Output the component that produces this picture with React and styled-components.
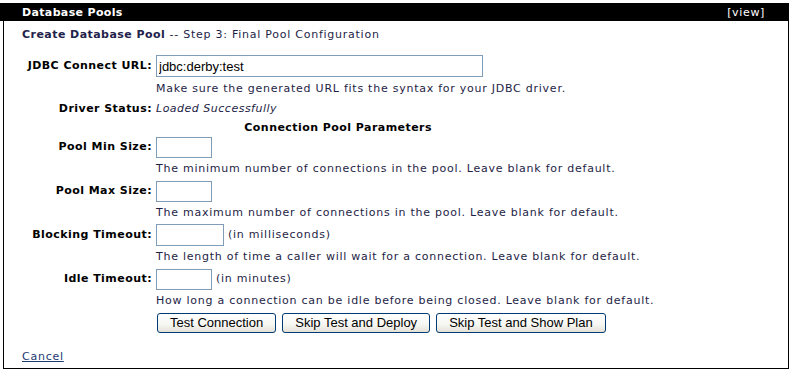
import React from "react";
import styled, { createGlobalStyle } from "styled-components";

const GlobalStyle = createGlobalStyle`
  html, body { margin: 0; padding: 0; background: #fff; }
  body {
    font-family: "DejaVu Sans", Verdana, sans-serif;
    font-size: 11px;
    letter-spacing: 0.75px;
    color: #1e1e46;
  }
`;

const Panel = styled.div`
  box-sizing: border-box;
  margin: 3px 0 0 3px;
  width: 786px;
  height: 366px;
  border: 1px solid #000;
`;

const Header = styled.div`
  display: flex;
  justify-content: space-between;
  align-items: center;
  height: 18px;
  margin: -1px -1px 0 -4px;
  padding: 0 24px 0 22px;
  background: #000;
  color: #fff;
`;

const HeaderTitle = styled.span`
  font-weight: bold;
  font-size: 11px;
  letter-spacing: 0.35px;
`;

const HeaderLink = styled.span`
  font-size: 11px;
  letter-spacing: 0.65px;
`;

const Subtitle = styled.div`
  margin: 7px 0 0 18px;
  line-height: 14px;
  color: #1e1e46;
`;

const Strong = styled.b`
  color: #22224a;
  letter-spacing: 0.45px;
`;

const Form = styled.div`
  display: grid;
  width: max-content;
  grid-template-columns: 130px max-content;
  column-gap: 4px;
  margin: 11px 0 0 18px;
`;

const Label = styled.div`
  height: ${(p) => p.$h}px;
  line-height: ${(p) => p.$h}px;
  text-align: right;
  font-weight: bold;
  letter-spacing: 0.45px;
  color: #000;
  white-space: nowrap;
`;

const Value = styled.div`
  display: flex;
  align-items: ${(p) => (p.$top ? "flex-start" : "center")};
  gap: 4px;
  height: ${(p) => p.$h}px;
  padding-top: ${(p) => p.$pt || 0}px;
  box-sizing: border-box;
  line-height: ${(p) => p.$h}px;
  white-space: nowrap;
  color: #1e1e46;
`;

const Italic = styled.i`
  color: #1e1e46;
  letter-spacing: 0.5px;
`;

const Section = styled.div`
  grid-column: 1 / span 2;
  text-align: center;
  font-weight: bold;
  letter-spacing: 0.45px;
  color: #000;
  height: ${(p) => p.$h}px;
  padding-top: 2px;
  box-sizing: border-box;
  line-height: 13px;
`;

const TextInput = styled.input`
  box-sizing: border-box;
  width: ${(p) => p.$w}px;
  height: ${(p) => p.$ih || 22}px;
  margin: 0;
  padding: 1px 2px;
  border: 1px solid #7f9db9;
  background: #fff;
  font-family: "Liberation Sans", Arial, sans-serif;
  font-size: 13px;
  letter-spacing: 0;
  color: #000;
  outline: none;
`;

const Buttons = styled.div`
  display: flex;
  gap: 6px;
  padding-top: 2px;
  height: 24px;
  box-sizing: border-box;
  margin-left: 1px;
`;

const Button = styled.button`
  box-sizing: border-box;
  height: 20px;
  padding: 0 12px;
  border: 1px solid #003c74;
  border-radius: 3px;
  background: linear-gradient(#ffffff 0%, #f6f6f2 60%, #e4e1d6 100%);
  font-family: "Liberation Sans", Arial, sans-serif;
  font-size: 13px;
  letter-spacing: 0;
  line-height: 18px;
  color: #000;
`;

const CancelLink = styled.a`
  display: inline-block;
  margin: 15px 0 0 18px;
  line-height: 14px;
  color: #1c3a73;
  text-decoration: underline;
`;

const fields = [
  { label: "Pool Min Size:", w: 56, ih: 21, desc: "The minimum number of connections in the pool. Leave blank for default." },
  { label: "Pool Max Size:", w: 56, ih: 21, desc: "The maximum number of connections in the pool. Leave blank for default." },
  { label: "Blocking Timeout:", w: 68, ih: 22, unit: "(in milliseconds)", desc: "The length of time a caller will wait for a connection. Leave blank for default." },
  { label: "Idle Timeout:", w: 56, ih: 21, unit: "(in minutes)", desc: "How long a connection can be idle before being closed. Leave blank for default." },
];

export default function App() {
  return (
    <>
      <GlobalStyle />
      <Panel>
        <Header>
          <HeaderTitle>Database Pools</HeaderTitle>
          <HeaderLink>[view]</HeaderLink>
        </Header>
        <Subtitle>
          <Strong>Create Database Pool</Strong> -- Step 3: Final Pool Configuration
        </Subtitle>
        <Form>
          <Label $h={26}>JDBC Connect URL:</Label>
          <Value $h={26} $top $pt={2}>
            <TextInput $w={327} defaultValue="jdbc:derby:test" />
          </Value>
          <Label $h={20} />
          <Value $h={20}>Make sure the generated URL fits the syntax for your JDBC driver.</Value>
          <Label $h={20}>Driver Status:</Label>
          <Value $h={20}>
            <Italic>Loaded Successfully</Italic>
          </Value>
          <Section $h={16}>Connection Pool Parameters</Section>
          {fields.map((f) => (
            <React.Fragment key={f.label}>
              <Label $h={24}>{f.label}</Label>
              <Value $h={24}>
                <TextInput $w={f.w} $ih={f.ih} />
                {f.unit}
              </Value>
              <Label $h={20} />
              <Value $h={20}>{f.desc}</Value>
            </React.Fragment>
          ))}
          <Label $h={24} />
          <Buttons>
            <Button>Test Connection</Button>
            <Button>Skip Test and Deploy</Button>
            <Button>Skip Test and Show Plan</Button>
          </Buttons>
        </Form>
        <CancelLink href="#">Cancel</CancelLink>
      </Panel>
    </>
  );
}
